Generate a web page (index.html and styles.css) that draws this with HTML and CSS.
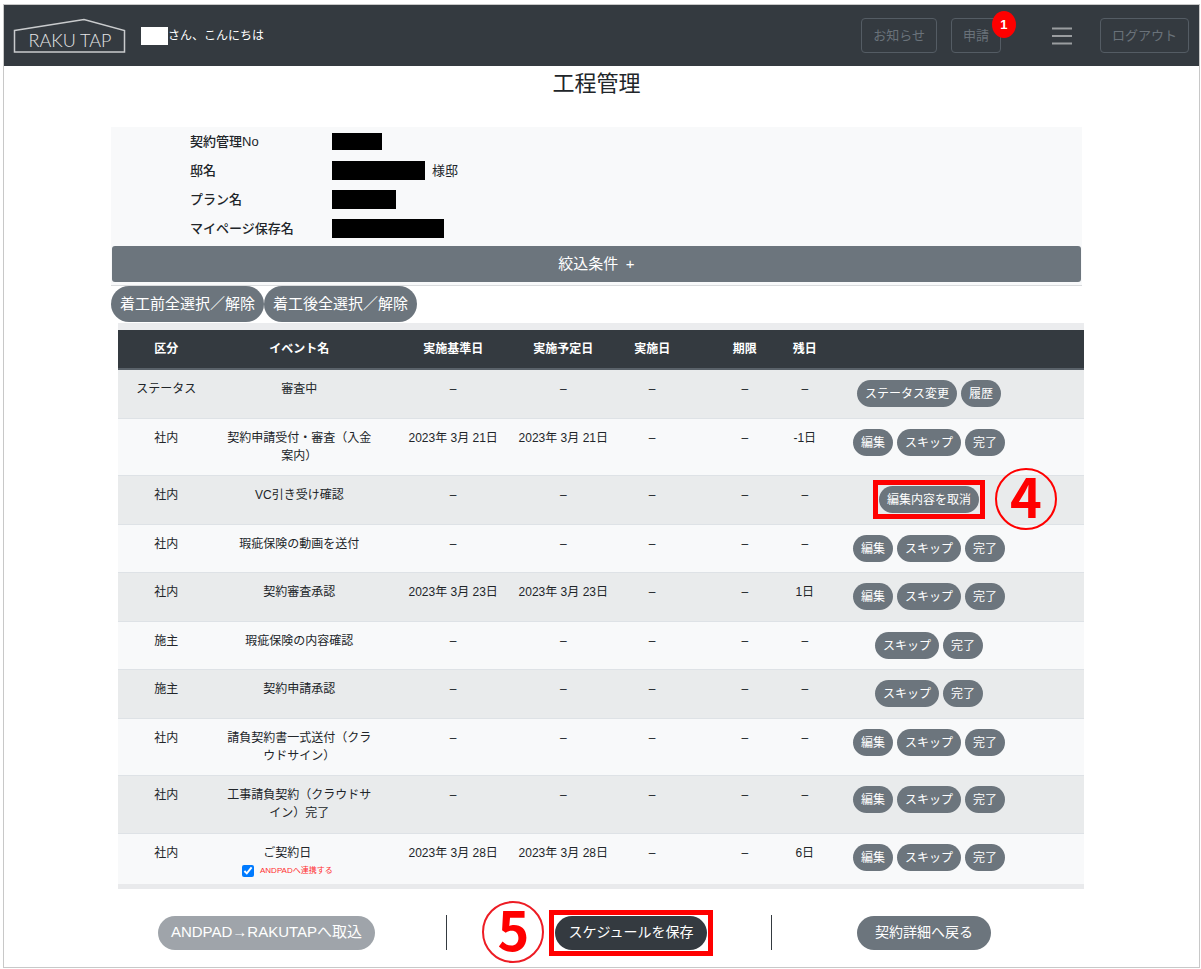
FILE: index.html
```html
<!DOCTYPE html>
<html lang="ja">
<head>
    <meta charset="UTF-8">
    <meta name="viewport" content="width=device-width, initial-scale=1.0">
    <title>工程管理 | RAKU TAP</title>
    <link rel="stylesheet" href="styles.css">
</head>
<body>
    <div class="frame">
        <header class="navbar">
            <a class="logo" href="#" aria-label="RAKU TAP">
                <svg width="113" height="36" viewBox="0 0 113 36">
                    <path d="M1.5 12.5 L71 1.5 L111.5 12.5 V34 H1.5 Z" fill="none" stroke="#c9cbcd" stroke-width="1.5"/>
                    <text x="57" y="29" text-anchor="middle">RAKU TAP</text>
                </svg>
            </a>
            <p class="greeting"><span class="user-mask"></span>さん、こんにちは</p>
            <nav class="nav-menu">
                <button type="button" class="btn-outline">お知らせ</button>
                <button type="button" class="btn-outline apply">申請<span class="badge">1</span></button>
                <button type="button" class="hamburger" aria-label="メニュー">
                    <svg width="20" height="18" viewBox="0 0 20 18">
                        <path d="M0 1.5H20M0 9H20M0 16.5H20" stroke="#9a9da0" stroke-width="2"/>
                    </svg>
                </button>
                <button type="button" class="btn-outline">ログアウト</button>
            </nav>
        </header>

        <main class="container">
            <h1>工程管理</h1>

            <section class="info">
                <dl>
                    <dt>契約管理No</dt>
                    <dd><span class="mask mask-no"></span></dd>
                    <dt>邸名</dt>
                    <dd><span class="mask mask-tei"></span>様邸</dd>
                    <dt>プラン名</dt>
                    <dd><span class="mask mask-plan"></span></dd>
                    <dt>マイページ保存名</dt>
                    <dd><span class="mask mask-mypage"></span></dd>
                </dl>
                <button type="button" class="filter">絞込条件&ensp;+</button>
            </section>

            <div class="select-buttons">
                <button type="button" class="btn btn-select">着工前全選択／解除</button>
                <button type="button" class="btn btn-select">着工後全選択／解除</button>
            </div>

            <div class="table-wrap">
                <table class="schedule">
                    <colgroup>
                        <col class="col-kubun">
                        <col class="col-event">
                        <col class="col-date">
                        <col class="col-date">
                        <col class="col-done">
                        <col class="col-limit">
                        <col class="col-left">
                        <col>
                    </colgroup>
                    <thead>
                        <tr>
                            <th>区分</th>
                            <th class="event">イベント名</th>
                            <th>実施基準日</th>
                            <th>実施予定日</th>
                            <th>実施日</th>
                            <th class="limit">期限</th>
                            <th>残日</th>
                            <th class="actions"></th>
                        </tr>
                    </thead>
                    <tbody>
                        <tr>
                            <td>ステータス</td>
                            <td class="event">審査中</td>
                            <td>–</td>
                            <td>–</td>
                            <td>–</td>
                            <td class="limit">–</td>
                            <td>–</td>
                            <td class="actions"><div class="btn-row">
                                <button type="button" class="btn btn-sm">ステータス変更</button>
                                <button type="button" class="btn btn-sm">履歴</button>
                            </div></td>
                        </tr>
                        <tr>
                            <td>社内</td>
                            <td class="event">契約申請受付・審査（入金案内）</td>
                            <td>2023年 3月 21日</td>
                            <td>2023年 3月 21日</td>
                            <td>–</td>
                            <td class="limit">–</td>
                            <td>-1日</td>
                            <td class="actions"><div class="btn-row">
                                <button type="button" class="btn btn-sm">編集</button>
                                <button type="button" class="btn btn-sm">スキップ</button>
                                <button type="button" class="btn btn-sm">完了</button>
                            </div></td>
                        </tr>
                        <tr>
                            <td>社内</td>
                            <td class="event">VC引き受け確認</td>
                            <td>–</td>
                            <td>–</td>
                            <td>–</td>
                            <td class="limit">–</td>
                            <td>–</td>
                            <td class="actions"><div class="btn-row">
                                <span class="marked">
                                    <button type="button" class="btn btn-sm">編集内容を取消</button>
                                    <span class="step step-right">4</span>
                                </span>
                            </div></td>
                        </tr>
                        <tr>
                            <td>社内</td>
                            <td class="event">瑕疵保険の動画を送付</td>
                            <td>–</td>
                            <td>–</td>
                            <td>–</td>
                            <td class="limit">–</td>
                            <td>–</td>
                            <td class="actions"><div class="btn-row">
                                <button type="button" class="btn btn-sm">編集</button>
                                <button type="button" class="btn btn-sm">スキップ</button>
                                <button type="button" class="btn btn-sm">完了</button>
                            </div></td>
                        </tr>
                        <tr>
                            <td>社内</td>
                            <td class="event">契約審査承認</td>
                            <td>2023年 3月 23日</td>
                            <td>2023年 3月 23日</td>
                            <td>–</td>
                            <td class="limit">–</td>
                            <td>1日</td>
                            <td class="actions"><div class="btn-row">
                                <button type="button" class="btn btn-sm">編集</button>
                                <button type="button" class="btn btn-sm">スキップ</button>
                                <button type="button" class="btn btn-sm">完了</button>
                            </div></td>
                        </tr>
                        <tr>
                            <td>施主</td>
                            <td class="event">瑕疵保険の内容確認</td>
                            <td>–</td>
                            <td>–</td>
                            <td>–</td>
                            <td class="limit">–</td>
                            <td>–</td>
                            <td class="actions"><div class="btn-row">
                                <button type="button" class="btn btn-sm">スキップ</button>
                                <button type="button" class="btn btn-sm">完了</button>
                            </div></td>
                        </tr>
                        <tr>
                            <td>施主</td>
                            <td class="event">契約申請承認</td>
                            <td>–</td>
                            <td>–</td>
                            <td>–</td>
                            <td class="limit">–</td>
                            <td>–</td>
                            <td class="actions"><div class="btn-row">
                                <button type="button" class="btn btn-sm">スキップ</button>
                                <button type="button" class="btn btn-sm">完了</button>
                            </div></td>
                        </tr>
                        <tr>
                            <td>社内</td>
                            <td class="event">請負契約書一式送付（クラウドサイン）</td>
                            <td>–</td>
                            <td>–</td>
                            <td>–</td>
                            <td class="limit">–</td>
                            <td>–</td>
                            <td class="actions"><div class="btn-row">
                                <button type="button" class="btn btn-sm">編集</button>
                                <button type="button" class="btn btn-sm">スキップ</button>
                                <button type="button" class="btn btn-sm">完了</button>
                            </div></td>
                        </tr>
                        <tr>
                            <td>社内</td>
                            <td class="event">工事請負契約（クラウドサイン）完了</td>
                            <td>–</td>
                            <td>–</td>
                            <td>–</td>
                            <td class="limit">–</td>
                            <td>–</td>
                            <td class="actions"><div class="btn-row">
                                <button type="button" class="btn btn-sm">編集</button>
                                <button type="button" class="btn btn-sm">スキップ</button>
                                <button type="button" class="btn btn-sm">完了</button>
                            </div></td>
                        </tr>
                        <tr class="contract">
                            <td>社内</td>
                            <td class="event">ご契約日
                                <label class="link-check" for="andpad"><input type="checkbox" id="andpad" checked>ANDPADへ連携する</label>
                            </td>
                            <td>2023年 3月 28日</td>
                            <td>2023年 3月 28日</td>
                            <td>–</td>
                            <td class="limit">–</td>
                            <td>6日</td>
                            <td class="actions"><div class="btn-row">
                                <button type="button" class="btn btn-sm">編集</button>
                                <button type="button" class="btn btn-sm">スキップ</button>
                                <button type="button" class="btn btn-sm">完了</button>
                            </div></td>
                        </tr>
                    </tbody>
                </table>
            </div>

            <div class="footer-buttons">
                <div class="footer-cell import">
                    <button type="button" class="btn btn-lg btn-import" disabled>ANDPAD→RAKUTAPへ取込</button>
                </div>
                <div class="footer-cell save">
                    <span class="marked">
                        <button type="button" class="btn btn-lg btn-dark">スケジュールを保存</button>
                        <span class="step step-left">5</span>
                    </span>
                </div>
                <div class="footer-cell back">
                    <button type="button" class="btn btn-lg btn-back">契約詳細へ戻る</button>
                </div>
            </div>
        </main>
    </div>
</body>
</html>
```

FILE: styles.css
```css
* {
    box-sizing: border-box;
}
body {
    margin: 4px 1px 0 3px;
    font-family: "Liberation Sans", "Noto Sans CJK JP", sans-serif;
    font-size: 12px;
    line-height: 18px;
    color: #212529;
    background: #fff;
}
button {
    font-family: inherit;
    cursor: pointer;
}
.frame {
    border: 1px solid #c8c8c8;
}

/* ヘッダー */
.navbar {
    display: flex;
    align-items: center;
    height: 61px;
    padding: 0 10px 0 9px;
    background: #343a40;
}
.logo {
    display: flex;
}
.logo text {
    font-family: Lato, sans-serif;
    font-size: 18px;
    font-weight: 300;
    fill: #e4e5e6;
}
.greeting {
    display: flex;
    align-items: center;
    margin: 0 0 0 15px;
    color: #fff;
}
.user-mask {
    width: 27px;
    height: 18px;
    background: #fff;
}
.nav-menu {
    display: flex;
    align-items: center;
    margin-left: auto;
}
.btn-outline {
    position: relative;
    height: 35px;
    padding: 0 11px 2px;
    border: 1px solid #545c64;
    border-radius: 4px;
    background: transparent;
    color: #6a727a;
    font-size: 13px;
}
.apply {
    margin-left: 14px;
}
.badge {
    position: absolute;
    top: -8px;
    right: -16px;
    width: 24px;
    height: 27px;
    border-radius: 50%;
    background: #f00;
    color: #fff;
    font-size: 13px;
    font-weight: bold;
    line-height: 27px;
}
.hamburger {
    display: flex;
    margin: 0 28px 0 51px;
    padding: 0;
    border: 0;
    background: transparent;
}

/* 本文 */
.container {
    padding: 0 117px 0 107px;
}
h1 {
    margin: 0 0 25px;
    font-size: 22px;
    font-weight: normal;
    line-height: 36px;
    text-align: center;
}
.info {
    border-bottom: 1px solid #d9dbdd;
    padding: 0 1px 3px;
    background: #f8f9fa;
}
.info dl {
    display: grid;
    grid-template-columns: 142px 1fr;
    grid-auto-rows: 29px;
    align-items: center;
    margin: 0 0 3px;
    padding-left: 78px;
    font-size: 13px;
}
.info dt {
    font-weight: 500;
}
.info dd {
    display: flex;
    align-items: center;
    gap: 7px;
    margin: 0;
}
.mask {
    height: 19px;
    background: #000;
}
.mask-no {
    width: 50px;
    height: 17px;
}
.mask-tei {
    width: 93px;
}
.mask-plan {
    width: 64px;
}
.mask-mypage {
    width: 112px;
}
.filter {
    width: 100%;
    height: 36px;
    padding: 0 0 4px;
    border: 0;
    border-radius: 3px;
    background: #6c757d;
    color: #fff;
    font-size: 15px;
}

/* ボタン */
.btn {
    border: 0;
    border-radius: 18px;
    background: #6c757d;
    color: #fff;
    white-space: nowrap;
}
.btn-sm {
    height: 27px;
    padding: 0 8px 2px;
    font-size: 12px;
}
.btn-select {
    height: 36px;
    padding: 0 9px 4px;
    font-size: 15px;
}
.btn-lg {
    height: 34px;
    padding: 0 13px 4px;
    font-size: 14px;
}
.btn-import {
    color: #fff;
    font-size: 15px;
    opacity: 0.65;
}
.btn-dark {
    background: #343a40;
}
.btn-back {
    padding: 0 18px 4px;
}
.select-buttons {
    display: flex;
}

/* 工程表 */
.table-wrap {
    margin: 1px -2px 0 7px;
    border-top: 7px solid #ebecee;
    border-bottom: 5px solid #e9eaec;
}
.schedule {
    width: 100%;
    table-layout: fixed;
    border-collapse: separate;
    border-spacing: 0;
    text-align: center;
}
.col-kubun {
    width: 10%;
}
.col-event {
    width: 19%;
}
.col-date {
    width: 11.4%;
}
.col-done {
    width: 7%;
}
.col-limit {
    width: 9.7%;
}
.col-left {
    width: 5.2%;
}
.schedule th {
    padding: 10px 4px;
    border-bottom: 2px solid #5a626a;
    background: #343a40;
    color: #fff;
}
.schedule td {
    padding: 10px 4px;
    border-bottom: 1px solid #dee2e6;
    background: #f8f9fa;
    vertical-align: top;
}
.schedule tbody tr:nth-child(odd) td {
    padding-bottom: 11px;
    background: #e9ebec;
}
.schedule .event {
    padding-left: 12px;
    padding-right: 26px;
}
.schedule .limit {
    padding-left: 28px;
}
.schedule .actions {
    padding-right: 60px;
}
.schedule .contract td {
    padding-bottom: 4px;
    border-bottom: 0;
}
.schedule .contract .event {
    padding-right: 50px;
}
.btn-row {
    display: flex;
    justify-content: center;
    gap: 4px;
}
.link-check {
    display: flex;
    align-items: center;
    justify-content: center;
    gap: 6px;
    color: #ff3030;
    font-size: 8px;
    white-space: nowrap;
}
.link-check input {
    width: 12px;
    height: 12px;
    margin: 0;
    accent-color: #007bff;
}

/* 手順の目印 */
.marked {
    position: relative;
    display: flex;
}
.marked::before {
    content: "";
    position: absolute;
    inset: -6px;
    border: 5px solid #f00;
}
.step {
    position: absolute;
    top: 50%;
    width: 62px;
    height: 62px;
    margin-top: -32px;
    border: 2px solid #f00;
    border-radius: 50%;
    color: #f00;
    font-family: "Noto Sans CJK JP", sans-serif;
    font-size: 54px;
    font-weight: bold;
    line-height: 50px;
    text-align: center;
}
.step-right {
    left: calc(100% + 16px);
}
.step-left {
    right: calc(100% + 11px);
    border-color: #ed1c24;
}

/* フッター */
.footer-buttons {
    display: grid;
    grid-template-columns: 335fr 325fr 311fr;
    padding: 26px 0 17px;
}
.footer-cell {
    display: flex;
    align-items: center;
    justify-content: center;
    height: 35px;
}
.footer-cell + .footer-cell {
    border-left: 1px solid #343a40;
}
.import {
    padding-right: 24px;
}
.save {
    padding-left: 44px;
}
.back {
    padding-right: 6px;
}
```
